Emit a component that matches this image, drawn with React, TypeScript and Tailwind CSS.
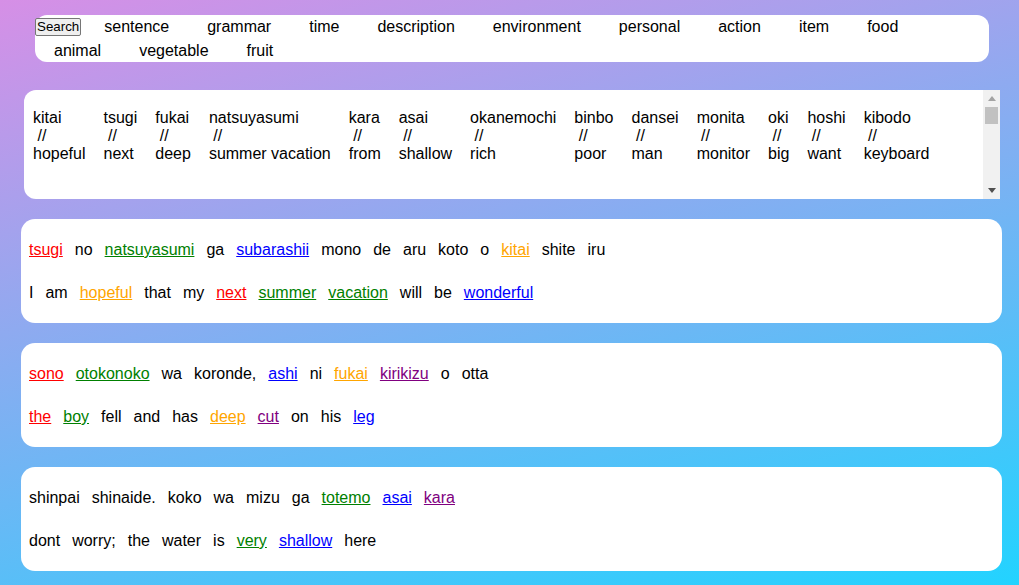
import React from "react";

type Word = { text: string; color?: string };

const topics = [
  "sentence",
  "grammar",
  "time",
  "description",
  "environment",
  "personal",
  "action",
  "item",
  "food",
  "animal",
  "vegetable",
  "fruit",
];

const vocab = [
  ["kitai", "hopeful"],
  ["tsugi", "next"],
  ["fukai", "deep"],
  ["natsuyasumi", "summer vacation"],
  ["kara", "from"],
  ["asai", "shallow"],
  ["okanemochi", "rich"],
  ["binbo", "poor"],
  ["dansei", "man"],
  ["monita", "monitor"],
  ["oki", "big"],
  ["hoshi", "want"],
  ["kibodo", "keyboard"],
];

// 色の対応
const colorClass: Record<string, string> = {
  red: "text-[#ff0000] underline",
  green: "text-[#008000] underline",
  blue: "text-[#0000ff] underline",
  orange: "text-[#ffa500] underline",
  purple: "text-[#800080] underline",
};

const w = (s: string): Word[] => s.split(" ").map((t) => ({ text: t }));

const sentences: { jp: Word[]; en: Word[] }[] = [
  {
    jp: [
      { text: "tsugi", color: "red" },
      { text: "no" },
      { text: "natsuyasumi", color: "green" },
      { text: "ga" },
      { text: "subarashii", color: "blue" },
      ...w("mono de aru koto o"),
      { text: "kitai", color: "orange" },
      ...w("shite iru"),
    ],
    en: [
      ...w("I am"),
      { text: "hopeful", color: "orange" },
      ...w("that my"),
      { text: "next", color: "red" },
      { text: "summer", color: "green" },
      { text: "vacation", color: "green" },
      ...w("will be"),
      { text: "wonderful", color: "blue" },
    ],
  },
  {
    jp: [
      { text: "sono", color: "red" },
      { text: "otokonoko", color: "green" },
      ...w("wa koronde,"),
      { text: "ashi", color: "blue" },
      { text: "ni" },
      { text: "fukai", color: "orange" },
      { text: "kirikizu", color: "purple" },
      ...w("o otta"),
    ],
    en: [
      { text: "the", color: "red" },
      { text: "boy", color: "green" },
      ...w("fell and has"),
      { text: "deep", color: "orange" },
      { text: "cut", color: "purple" },
      ...w("on his"),
      { text: "leg", color: "blue" },
    ],
  },
  {
    jp: [
      ...w("shinpai shinaide. koko wa mizu ga"),
      { text: "totemo", color: "green" },
      { text: "asai", color: "blue" },
      { text: "kara", color: "purple" },
    ],
    en: [
      ...w("dont worry; the water is"),
      { text: "very", color: "green" },
      { text: "shallow", color: "blue" },
      { text: "here" },
    ],
  },
];

const Line: React.FC<{ words: Word[] }> = ({ words }) => (
  <div className="flex gap-x-[12px] leading-[18px] h-[18px] whitespace-nowrap">
    {words.map((wd, i) => (
      <span key={i} className={wd.color ? colorClass[wd.color] : "text-black"}>
        {wd.text}
      </span>
    ))}
  </div>
);

// 旧式スクロールバーの見た目
const ScrollBar: React.FC = () => (
  <div className="w-[17px] shrink-0 bg-[#f1f1f1] flex flex-col">
    <div className="h-[17px] flex items-center justify-center">
      <svg width="8" height="5" viewBox="0 0 8 5">
        <path d="M0 5 L4 0 L8 5 Z" fill="#a3a3a3" />
      </svg>
    </div>
    <div className="flex-1">
      <div className="mx-[2px] h-[17px] bg-[#c1c1c1]" />
    </div>
    <div className="h-[17px] flex items-center justify-center">
      <svg width="8" height="5" viewBox="0 0 8 5">
        <path d="M0 0 L8 0 L4 5 Z" fill="#505050" />
      </svg>
    </div>
  </div>
);

const App: React.FC = () => {
  return (
    <div
      className="min-h-screen bg-[linear-gradient(166deg,#d68fe6,#22d3ff)] pt-[15px] pb-[14px] text-[16px] text-black"
      style={{ fontFamily: '"Liberation Sans", Arial, sans-serif' }}
    >
      {/* トピックナビ */}
      <nav className="ml-[35px] mr-[30px] h-[47px] rounded-[12px] bg-white flex flex-wrap content-start items-center gap-y-px">
        <button className="mr-[4px] h-[18px] rounded-[2px] border border-[#767676] bg-[#efefef] px-px text-[13.33px] leading-[14px] text-black">
          Search
        </button>
        {topics.map((t) => (
          <a key={t} className="mx-[19px] h-[23px] leading-[23px] cursor-pointer">
            {t}
          </a>
        ))}
      </nav>

      {/* 単語リスト */}
      <div className="mt-[28px] ml-[24px] mr-[19px] h-[109px] flex rounded-l-[12px] bg-white">
        <div className="flex-1 overflow-hidden pl-[9px] pt-[19px] flex gap-x-[18px] leading-[18px]">
          {vocab.map(([jp, en]) => (
            <div key={jp} className="flex flex-col whitespace-nowrap">
              <span>{jp}</span>
              <span>{"\u00a0//"}</span>
              <span>{en}</span>
            </div>
          ))}
        </div>
        <ScrollBar />
      </div>

      {/* 例文カード */}
      <div className="mt-[20px] flex flex-col gap-[20px]">
        {sentences.map((s, i) => (
          <div
            key={i}
            className="ml-[21px] mr-[17px] h-[104px] rounded-[14px] bg-white px-[8px] pt-[22px] flex flex-col gap-[25px]"
          >
            <Line words={s.jp} />
            <Line words={s.en} />
          </div>
        ))}
      </div>
    </div>
  );
};

export default App;
